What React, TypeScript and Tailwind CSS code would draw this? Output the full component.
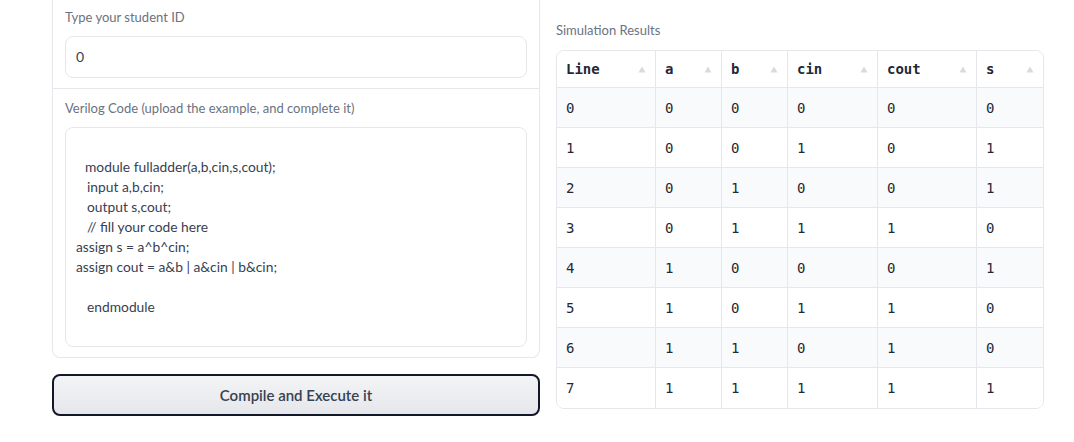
import React from "react";

const cols = ["Line", "a", "b", "cin", "cout", "s"];
const rows = [
  [0, 0, 0, 0, 0, 0],
  [1, 0, 0, 1, 0, 1],
  [2, 0, 1, 0, 0, 1],
  [3, 0, 1, 1, 1, 0],
  [4, 1, 0, 0, 0, 1],
  [5, 1, 0, 1, 1, 0],
  [6, 1, 1, 0, 1, 0],
  [7, 1, 1, 1, 1, 1],
];

const gridCols = "grid grid-cols-[99px_66px_66px_90px_99px_66px]";

const codeLines: { text: string; pad: string }[] = [
  { text: "", pad: "" },
  { text: "module fulladder(a,b,cin,s,cout);", pad: "pl-[9px]" },
  { text: "input a,b,cin;", pad: "pl-[11px]" },
  { text: "output s,cout;", pad: "pl-[11px]" },
  { text: "// fill your code here", pad: "pl-[11px]" },
  { text: "assign s = a^b^cin;", pad: "" },
  { text: "assign cout = a&b | a&cin | b&cin;", pad: "" },
  { text: "", pad: "" },
  { text: "endmodule", pad: "pl-[11px]" },
];

const SortArrow = () => (
  <svg width="8" height="7" viewBox="0 0 8 7" className="shrink-0">
    <path d="M4 0.5 L7.5 6.5 L0.5 6.5 Z" fill="#d7dbe0" />
  </svg>
);

export default function App() {
  return (
    <div
      className="min-h-[442px] bg-white pl-[52px] text-[#374151]"
      style={{ fontFamily: "Lato, 'Noto Sans', sans-serif" }}
    >
      <div className="flex gap-4">
        {/* left column */}
        <div className="w-[488px] shrink-0">
          <div className="rounded-b-lg border-x border-b border-[#e5e7eb]">
            <div className="px-3 pt-[7px] pb-[10px]">
              <div className="mb-[9px] h-5 text-[13px] leading-5 text-[#6b7280]">
                Type your student ID
              </div>
              <div className="flex h-[42px] items-center rounded-lg border border-[#e5e7eb] px-[10px] text-sm">
                0
              </div>
            </div>
            <div className="border-t border-[#e5e7eb] px-3 pt-[9px] pb-[10px]">
              <div className="mb-[9px] h-5 text-[13px] leading-5 text-[#6b7280]">
                Verilog Code (upload the example, and complete it)
              </div>
              <div className="h-[220px] rounded-lg border border-[#e5e7eb] px-[10px] pt-[9px] text-[13.8px] leading-5 text-[#374151]">
                {codeLines.map((l, i) => (
                  <div key={i} className={`h-5 whitespace-pre ${l.pad}`}>
                    {l.text}
                  </div>
                ))}
              </div>
            </div>
          </div>
          <button className="mt-4 flex h-[42px] w-full items-center justify-center rounded-lg border-2 border-[#111827] bg-gradient-to-b from-[#f3f4f6] to-[#e5e7eb] text-[15px] font-semibold text-[#374151]">
            Compile and Execute it
          </button>
        </div>

        {/* right column */}
        <div className="w-[488px] shrink-0 pt-5">
          <div className="mb-[10px] h-5 text-[13px] leading-5 text-[#6b7280]">
            Simulation Results
          </div>
          <div
            className="overflow-hidden rounded-lg border border-[#e5e7eb] text-sm text-[#1f2937]"
            style={{ fontFamily: "'DejaVu Sans Mono', 'Liberation Mono', monospace" }}
          >
            <div className={`${gridCols} h-[37px] border-b border-[#e5e7eb] bg-white`}>
              {cols.map((c, i) => (
                <div
                  key={c}
                  className={`flex items-center justify-between px-[9px] font-semibold ${
                    i < cols.length - 1 ? "border-r border-[#e5e7eb]" : ""
                  }`}
                >
                  <span>{c}</span>
                  <SortArrow />
                </div>
              ))}
            </div>
            {rows.map((r, ri) => (
              <div
                key={ri}
                className={`${gridCols} h-10 ${ri < rows.length - 1 ? "border-b border-[#e5e7eb]" : ""} ${
                  ri % 2 === 0 ? "bg-[#f9fafb]" : "bg-white"
                }`}
              >
                {r.map((v, ci) => (
                  <div
                    key={ci}
                    className={`flex items-center px-[9px] ${
                      ci < r.length - 1 ? "border-r border-[#e5e7eb]" : ""
                    }`}
                  >
                    {v}
                  </div>
                ))}
              </div>
            ))}
          </div>
        </div>
      </div>
    </div>
  );
}
